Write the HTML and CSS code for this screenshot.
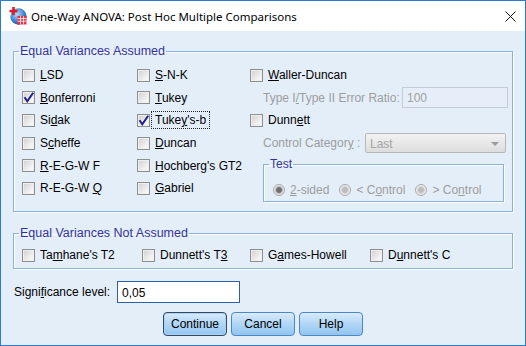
FILE: index.html
```html
<!DOCTYPE html>
<html lang="en">

<head>
    <meta charset="UTF-8">
    <title>One-Way ANOVA: Post Hoc Multiple Comparisons</title>
    <link rel="stylesheet" href="styles.css">
</head>

<body>

    <div class="window">

        <div class="titlebar">
            <svg class="app-icon" viewBox="0 0 18 18">
                <defs>
                    <radialGradient id="globe" cx="40%" cy="35%" r="70%">
                        <stop offset="0" stop-color="#b9dcf7" />
                        <stop offset="0.55" stop-color="#4b8fd6" />
                        <stop offset="1" stop-color="#1d4f98" />
                    </radialGradient>
                </defs>
                <circle cx="9.5" cy="9.5" r="8.2" fill="url(#globe)" />
                <rect x="0.5" y="2.8" width="8" height="2.6" fill="#d8202c" />
                <rect x="3.2" y="0" width="2.6" height="8.2" fill="#d8202c" />
                <rect x="8.5" y="9" width="9" height="8.5" fill="#e8304a" />
                <path d="M8.5 11.6H17.5M8.5 14.2H17.5M11.5 9V17.5M14.5 9V17.5" stroke="#fff" stroke-width="0.8" />
            </svg>
            <span class="title">One-Way ANOVA: Post Hoc Multiple Comparisons</span>
            <svg class="close" viewBox="0 0 11 11">
                <path d="M0.5 0.5L10.5 10.5M10.5 0.5L0.5 10.5" stroke="#111" stroke-width="1" />
            </svg>
        </div>

        <div class="content">

            <fieldset class="group group-assumed">
                <legend>Equal Variances Assumed</legend>
                <div class="assumed-grid">

                    <div class="col">
                        <label class="check"><span class="box"></span><span><u>L</u>SD</span></label>
                        <label class="check"><span class="box checked"><svg viewBox="0 0 11 11"><path d="M1.5 5.2L4.3 9.2L10.2 0.8" /></svg></span><span><u>B</u>onferroni</span></label>
                        <label class="check"><span class="box"></span><span>Si<u>d</u>ak</span></label>
                        <label class="check"><span class="box"></span><span>S<u>c</u>heffe</span></label>
                        <label class="check"><span class="box"></span><span><u>R</u>-E-G-W F</span></label>
                        <label class="check"><span class="box"></span><span>R-E-G-W <u>Q</u></span></label>
                    </div>

                    <div class="col">
                        <label class="check"><span class="box"></span><span><u>S</u>-N-K</span></label>
                        <label class="check"><span class="box"></span><span><u>T</u>ukey</span></label>
                        <label class="check"><span class="box checked"><svg viewBox="0 0 11 11"><path d="M1.5 5.2L4.3 9.2L10.2 0.8" /></svg></span><span class="focus">Tuke<u>y</u>'s-b</span></label>
                        <label class="check"><span class="box"></span><span><u>D</u>uncan</span></label>
                        <label class="check"><span class="box"></span><span><u>H</u>ochberg's GT2</span></label>
                        <label class="check"><span class="box"></span><span><u>G</u>abriel</span></label>
                    </div>

                    <div class="col col-wide">
                        <label class="check"><span class="box"></span><span><u>W</u>aller-Duncan</span></label>
                        <div class="field-row">
                            <span class="muted">Type I<u>/</u>Type II Error Ratio:</span>
                            <span class="ratio-input">100</span>
                        </div>
                        <label class="check"><span class="box"></span><span>Dunn<u>e</u>tt</span></label>
                        <div class="field-row">
                            <span class="muted">Control Categor<u>y</u> :</span>
                            <span class="select">Last<span class="arrow"></span></span>
                        </div>

                        <fieldset class="group test">
                            <legend>Test</legend>
                            <div class="radios">
                                <span class="radio"><span class="dot on"></span><span><u>2</u>-sided</span></span>
                                <span class="radio"><span class="dot"></span><span>&lt; C<u>o</u>ntrol</span></span>
                                <span class="radio"><span class="dot"></span><span>&gt; Co<u>n</u>trol</span></span>
                            </div>
                        </fieldset>
                    </div>

                </div>
            </fieldset>

            <fieldset class="group group-not-assumed">
                <legend>Equal Variances Not Assumed</legend>
                <div class="not-assumed-row">
                    <label class="check"><span class="box"></span><span>Ta<u>m</u>hane's T2</span></label>
                    <label class="check"><span class="box"></span><span>Dunnett's T<u>3</u></span></label>
                    <label class="check"><span class="box"></span><span>G<u>a</u>mes-Howell</span></label>
                    <label class="check"><span class="box"></span><span>D<u>u</u>nnett's C</span></label>
                </div>
            </fieldset>

            <div class="sig-row">
                <span class="sig-label">Signi<u>f</u>icance level:</span>
                <span class="sig-input">0,05</span>
            </div>

            <div class="buttons">
                <button class="btn default">Continue</button>
                <button class="btn">Cancel</button>
                <button class="btn">Help</button>
            </div>

        </div>

    </div>

</body>

</html>
```

FILE: styles.css
```css
*,
*::before,
*::after {
    margin: 0;
    padding: 0;
    box-sizing: border-box;
}

body {
    font-family: "Liberation Sans", Arial, sans-serif;
    font-size: 12px;
    color: #000;
    background: #fff;
}

u {
    text-underline-offset: 1px;
}

.window {
    width: 526px;
    height: 346px;
    border: 1px solid #2b7bd0;
    background: #e4eef9;
    display: flex;
    flex-direction: column;
}

/* title bar */

.titlebar {
    height: 30px;
    flex-shrink: 0;
    background: #fff;
    display: flex;
    align-items: center;
    padding-left: 8px;
}

.app-icon {
    width: 18px;
    height: 18px;
    margin-right: 4px;
}

.title {
    font-family: "Noto Sans", sans-serif;
    font-size: 11.5px;
    color: #000;
}

.close {
    width: 11px;
    height: 11px;
    margin-left: auto;
    margin-right: 9px;
}

.content {
    padding: 0 12px;
}

/* group boxes */

.group {
    border: 1px solid #8db0d8;
    box-shadow: 1px 1px 0 #fff, inset 1px 1px 0 #fff;
}

.group legend {
    color: #33339a;
    line-height: 14px;
    padding: 0 1px;
    margin-left: -3px;
}

.group-assumed {
    margin-top: 13px;
    padding: 6px 4px 9px 8px;
}

.group-assumed > legend,
.group-not-assumed > legend {
    font-size: 12.5px;
}

.assumed-grid {
    display: grid;
    grid-template-columns: 115px 113px 1fr;
}

.col {
    display: grid;
    grid-auto-rows: 22.6px;
}

.col-wide {
    grid-template-rows: repeat(4, 22.6px) auto;
}

.check {
    display: flex;
    align-items: center;
    gap: 5px;
    white-space: nowrap;
}

.box {
    width: 13px;
    height: 13px;
    flex-shrink: 0;
    border: 1px solid #8e8f8f;
    background: linear-gradient(135deg, #cfcfcf, #f2f2f2 70%, #fdfdfd);
    box-shadow: inset 0 0 0 1px #eeeeee;
}

.box svg {
    display: block;
    width: 11px;
    height: 11px;
    overflow: visible;
}

.box svg path {
    fill: none;
    stroke: #1f1f8a;
    stroke-width: 2;
}

.focus {
    border: 1px dotted #222;
    padding: 1px 3px;
    margin: -2px -4px;
}

.field-row {
    display: flex;
    align-items: center;
    padding-left: 13px;
}

.muted {
    color: #9d9d9d;
    white-space: nowrap;
}

.ratio-input {
    margin-left: auto;
    width: 106px;
    height: 21px;
    border: 1px solid #c4ccd6;
    background: #e6eff9;
    color: #a0a0a0;
    padding: 3px 0 0 4px;
}

.select {
    margin-left: auto;
    margin-right: 2px;
    width: 141px;
    height: 20px;
    border: 1px solid #b8b8b8;
    border-radius: 2px;
    background: linear-gradient(#f2f2f2, #dddddd);
    color: #a4a4a4;
    display: flex;
    align-items: center;
    padding: 1px 6px 0 4px;
}

.arrow {
    margin-left: auto;
    border-left: 4px solid transparent;
    border-right: 4px solid transparent;
    border-top: 4px solid #9a9a9a;
}

.test {
    margin: 3px 4px 0 13px;
    padding: 11px 0 3px 9px;
}

.test legend {
    margin-left: -4px;
}

.radios {
    display: flex;
    gap: 10px;
    height: 16px;
    align-items: center;
    color: #9d9d9d;
}

.radio {
    display: flex;
    align-items: center;
    gap: 5px;
}

.dot {
    width: 12px;
    height: 12px;
    border-radius: 50%;
    border: 1px solid #a8a8a8;
    background: radial-gradient(circle, #bdbdbd 0 2.5px, #cfcfcf 3px, #ececec 4.5px);
}

.dot.on {
    background: radial-gradient(circle, #6f6f6f 0 2.5px, #b5b5b5 3.2px, #e6e6e6 4.5px);
}

.group-not-assumed {
    margin-top: 14px;
    padding: 7px 4px 5px 8px;
}

.not-assumed-row {
    display: grid;
    grid-template-columns: 120px 108px 120px 1fr;
    height: 16px;
}

/* significance */

.sig-row {
    display: flex;
    align-items: center;
    margin-top: 12px;
}

.sig-label {
    width: 104px;
    padding-left: 1px;
}

.sig-input {
    width: 123px;
    height: 22px;
    border: 1px solid #2c5fa6;
    background: #fff;
    padding: 4px 0 0 4px;
}

/* buttons */

.buttons {
    display: flex;
    justify-content: center;
    gap: 4px;
    margin-top: 9px;
}

.btn {
    width: 64px;
    height: 24px;
    border: 1px solid #4a88c8;
    border-radius: 4px;
    background: linear-gradient(#d9ecfc, #b4d8f6 45%, #92c5f1);
    font-family: "Liberation Sans", Arial, sans-serif;
    font-size: 12px;
    color: #000;
}

.btn.default {
    border-color: #354a62;
    box-shadow: inset 0 0 0 1px #a9d2f5;
}
```
